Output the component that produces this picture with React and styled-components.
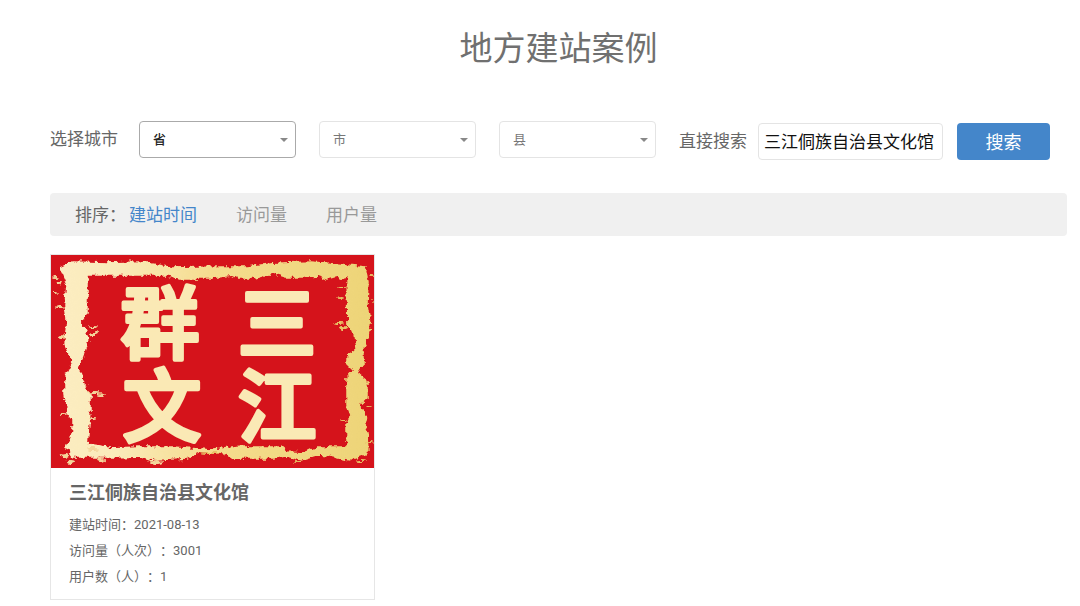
import React, { useState } from 'react';
import styled, { createGlobalStyle } from 'styled-components';

const GlobalStyle = createGlobalStyle`
  * {
    box-sizing: border-box;
  }

  body {
    margin: 0;
    background: #fff;
    color: #666;
    font-family: Roboto, "Noto Sans CJK SC", sans-serif;
    font-size: 17px;
    text-spacing-trim: space-all;
  }

  button, input, select {
    font-family: inherit;
  }
`;

const Page = styled.main`
  padding: 29px 13px 0 50px;
`;

const Title = styled.h1`
  margin: 0;
  font-size: 33px;
  font-weight: 400;
  line-height: 40px;
  text-align: center;
  color: #707070;
`;

const Filters = styled.div`
  display: flex;
  align-items: flex-start;
  margin-top: 52px;
`;

const Label = styled.label`
  line-height: 37px;
  margin-right: ${props => props.$gap}px;
  white-space: nowrap;
`;

const Selects = styled.div`
  display: flex;
  gap: 23px;
`;

const SelectBox = styled.div`
  position: relative;
  width: 157px;

  &::after {
    content: '';
    position: absolute;
    top: 17px;
    right: 8px;
    border: 4px solid transparent;
    border-top-color: #888;
    border-bottom: 0;
    pointer-events: none;
  }
`;

const Select = styled.select`
  appearance: none;
  width: 100%;
  height: 37px;
  padding: 0 13px;
  border: 1px solid ${props => props.$active ? '#aaa' : '#e4e4e4'};
  border-radius: 4px;
  background: #fff;
  color: ${props => props.$active ? '#222' : '#777'};
  font-size: 13px;
  font-weight: ${props => props.$active ? 500 : 400};
`;

const SearchForm = styled.form`
  display: flex;
  margin: 2px 0 0 23px;
`;

const SearchInput = styled.input`
  width: 185px;
  height: 37px;
  padding: 0 5px 2px;
  border: 1px solid #e4e4e4;
  border-radius: 4px;
  color: #111;
  font-size: 17px;
`;

const SearchButton = styled.button`
  width: 93px;
  height: 37px;
  margin-left: 14px;
  padding: 0 0 2px;
  border: none;
  border-radius: 4px;
  background: #4486ca;
  color: #fff;
  font-size: 18px;
  cursor: pointer;
`;

const SortBar = styled.div`
  display: flex;
  align-items: center;
  height: 43px;
  margin-top: 33px;
  padding: 0 25px 3px;
  border-radius: 4px;
  background: #f0f0f0;
`;

const SortOptions = styled.div`
  display: flex;
  gap: 39px;
  margin-left: 3px;
`;

const SortButton = styled.button`
  padding: 0;
  border: none;
  background: none;
  color: ${props => props.$active ? '#4486ca' : '#999'};
  font-size: 17px;
  cursor: pointer;
`;

const CardGrid = styled.div`
  display: grid;
  grid-template-columns: repeat(auto-fill, 325px);
  gap: 20px;
  margin-top: 18px;
`;

const Card = styled.article`
  border: 1px solid #e6e6e6;
`;

const Cover = styled.svg`
  display: block;
  width: 100%;
  background: #d5131b;
`;

const CoverText = styled.text`
  font-family: "Noto Sans CJK SC", sans-serif;
  font-size: 79px;
  font-weight: 500;
  text-anchor: middle;
  fill: #fae9b5;
  stroke: #fae9b5;
  stroke-width: 4;
  stroke-linejoin: round;
`;

const CardBody = styled.div`
  padding: 11px 18px 9px;
`;

const CardTitle = styled.h2`
  margin: 0 0 5px;
  font-size: 18px;
  font-weight: 700;
  line-height: 28px;
`;

const CardLine = styled.p`
  margin: 0;
  font-size: 13px;
  line-height: 26px;
`;

const regions = ['省', '市', '县'];
const sorts = ['建站时间', '访问量', '用户量'];

const sites = [
  { name: '三江侗族自治县文化馆', created: '2021-08-13', visits: 3001, users: 1 },
];

// worn frame of the seal, outer edge first and then the inner edge
const FRAME = `
  M9 13 L22 7 L56 8 L89 7 L106 10 L122 13 L169 12 L197 12 L209 10 L231 8 L261 7
  L297 10 L314 12 L317 27 L316 50 L319 67 L317 83 L312 92 L312 110 L307 118
  L316 125 L316 143 L308 150 L316 163 L313 170 L316 177 L317 198 L297 205
  L280 201 L267 200 L251 205 L236 201 L221 203 L181 203 L174 198 L152 196
  L136 203 L102 205 L90 201 L66 202 L22 202 L16 193 L22 177 L22 163 L17 157
  L14 140 L14 123 L19 113 L22 107 L14 90 L16 63 L14 50 L16 30 Z
  M36 20 L36 57 L29 67 L37 83 L32 100 L27 113 L32 127 L39 140 L39 157 L36 190
  L56 193 L89 192 L122 192 L162 195 L191 192 L231 192 L237 197 L254 198
  L266 192 L296 192 L296 170 L300 160 L296 150 L296 123 L303 115 L296 108
  L296 100 L306 93 L304 80 L297 70 L296 23 L286 21 L276 24 L268 21 L254 22
  L234 22 L221 18 L204 23 L187 23 L181 20 L161 23 L129 23 L116 20 L89 20
  L56 20 Z
`;

// flakes of paint along the frame: x, y, rx, ry
const SPECKS = [
  [5, 22, 3, 1], [8, 29, 3, 2], [4, 38, 2, 1], [9, 52, 4, 1],
  [42, 72, 5, 1], [43, 79, 4, 2], [10, 82, 4, 2], [44, 138, 7, 1],
  [50, 140, 4, 1], [12, 159, 4, 1], [42, 163, 4, 1], [14, 200, 4, 2],
  [20, 207, 4, 2], [50, 205, 5, 2], [42, 194, 6, 1], [106, 207, 6, 2],
  [291, 32, 4, 1], [289, 43, 3, 1], [288, 68, 6, 1], [292, 73, 4, 2],
  [321, 20, 3, 1], [322, 46, 2, 1], [293, 166, 3, 1], [318, 152, 3, 1],
  [248, 207, 5, 1], [310, 206, 5, 1], [160, 198, 9, 1], [319, 187, 3, 1],
];

function SealCover() {
  return (
    <Cover viewBox="0 0 323 213" role="img" aria-label="三江群文">
      <defs>
        <linearGradient id="gold" gradientUnits="userSpaceOnUse" x1="0" y1="0" x2="323" y2="0">
          <stop offset="0" stopColor="#fcedc2" />
          <stop offset="0.2" stopColor="#faebba" />
          <stop offset="0.5" stopColor="#f5dc8e" />
          <stop offset="1" stopColor="#edd477" />
        </linearGradient>
        <filter id="worn" x="-5%" y="-5%" width="110%" height="110%" colorInterpolationFilters="sRGB">
          <feTurbulence type="fractalNoise" baseFrequency="0.18" numOctaves="3" seed="7" />
          <feDisplacementMap in="SourceGraphic" scale="7" xChannelSelector="R" yChannelSelector="G" />
        </filter>
      </defs>
      <g fill="url(#gold)" stroke="url(#gold)" strokeWidth="1.5" filter="url(#worn)">
        <path fillRule="evenodd" d={FRAME} />
      </g>
      <g filter="url(#worn)">
        {SPECKS.map(([x, y, rx, ry]) => (
          <ellipse key={`${x}-${y}`} cx={x} cy={y} rx={rx} ry={ry} fill={x < 160 ? '#f3d59b' : '#e9c266'} />
        ))}
      </g>
      <CoverText x="109" y="98">群</CoverText>
      <CoverText x="226" y="98">三</CoverText>
      <CoverText x="111" y="181">文</CoverText>
      <CoverText x="226" y="181">江</CoverText>
    </Cover>
  );
}

function App() {
  const [sort, setSort] = useState(sorts[0]);
  const [keyword, setKeyword] = useState('三江侗族自治县文化馆');

  return (
    <Page>
      <GlobalStyle />
      <Title>地方建站案例</Title>

      <Filters>
        <Label htmlFor="region-0" $gap={21}>选择城市</Label>
        <Selects>
          {regions.map((region, i) => (
            <SelectBox key={region}>
              <Select id={`region-${i}`} aria-label={region} $active={i === 0}>
                <option>{region}</option>
              </Select>
            </SelectBox>
          ))}
        </Selects>
        <SearchForm onSubmit={(e) => e.preventDefault()}>
          <Label htmlFor="keyword" $gap={11}>直接搜索</Label>
          <SearchInput
            id="keyword"
            value={keyword}
            onChange={(e) => setKeyword(e.target.value)}
          />
          <SearchButton type="submit">搜索</SearchButton>
        </SearchForm>
      </Filters>

      <SortBar>
        <span>排序：</span>
        <SortOptions>
          {sorts.map((name) => (
            <SortButton
              key={name}
              type="button"
              $active={name === sort}
              onClick={() => setSort(name)}
            >
              {name}
            </SortButton>
          ))}
        </SortOptions>
      </SortBar>

      <CardGrid>
        {sites.map((site) => (
          <Card key={site.name}>
            <SealCover />
            <CardBody>
              <CardTitle>{site.name}</CardTitle>
              <CardLine>建站时间：{site.created}</CardLine>
              <CardLine>访问量（人次）：{site.visits}</CardLine>
              <CardLine>用户数（人）：{site.users}</CardLine>
            </CardBody>
          </Card>
        ))}
      </CardGrid>
    </Page>
  );
}

export default App;
